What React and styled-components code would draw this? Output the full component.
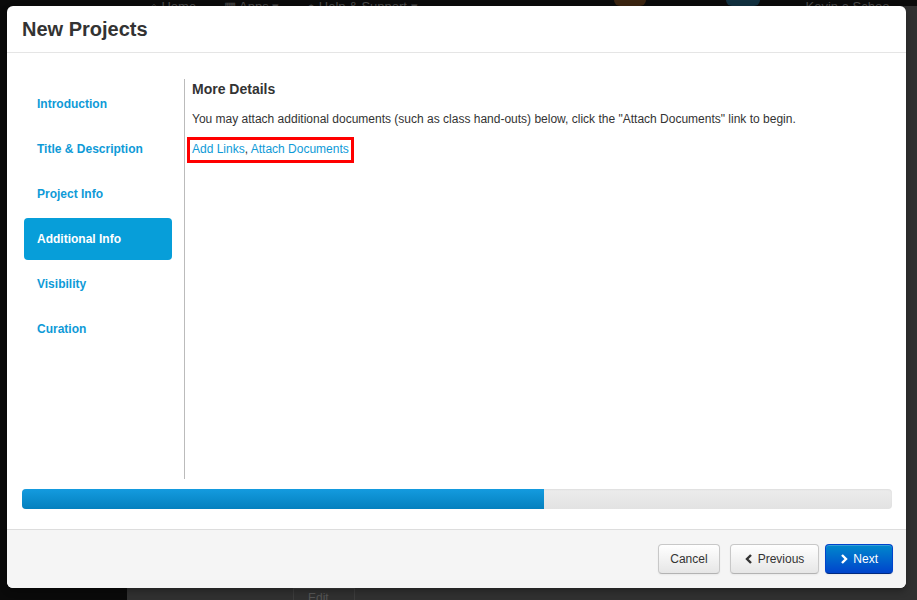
import React from "react";
import styled, { createGlobalStyle } from "styled-components";

const GlobalStyle = createGlobalStyle`
  html, body {
    margin: 0;
    padding: 0;
    background: #2f2f2f;
    font-family: "Liberation Sans", Arial, sans-serif;
  }
`;

const Page = styled.div`
  position: relative;
  width: 917px;
  height: 600px;
  overflow: hidden;
  background: #2f2f2f;
`;

const TopBar = styled.div`
  height: 6px;
  background: #0b0b0b;
  display: flex;
  align-items: flex-end;
  overflow: hidden;
  color: #4a4a4a;
  font-size: 13px;
  line-height: 13px;
`;

const TopItem = styled.span`
  margin-left: ${(p) => p.$left}px;
  white-space: nowrap;
  transform: translateY(7px);
`;

const TopBadge = styled.span`
  margin-left: ${(p) => p.$left}px;
  width: ${(p) => p.$w}px;
  height: 6px;
  border-radius: 0 0 6px 6px;
  background: ${(p) => p.$color};
`;

const PageRow = styled.div`
  display: flex;
  height: 594px;
`;

const DarkSide = styled.div`
  width: 127px;
  background: #0a0a0a;
`;

const PageMain = styled.div`
  flex: 1;
  background: #303030;
  display: flex;
  align-items: flex-end;
  padding-left: 166px;
`;

const EditStub = styled.div`
  width: 62px;
  height: 12px;
  border: 1px solid #3c3c3c;
  border-bottom: none;
  color: #555;
  font-size: 12px;
  line-height: 18px;
  padding-left: 14px;
  box-sizing: border-box;
  overflow: hidden;
`;

const Modal = styled.div`
  position: absolute;
  top: 6px;
  left: 7px;
  width: 899px;
  background: #fff;
  border-radius: 6px;
  box-shadow: 0 3px 7px rgba(0, 0, 0, 0.3);
  overflow: hidden;
`;

const Header = styled.div`
  height: 47px;
  box-sizing: border-box;
  border-bottom: 1px solid #e5e5e5;
  display: flex;
  align-items: center;
  padding: 0 15px;
`;

const Title = styled.h3`
  margin: 0;
  font-size: 20px;
  font-weight: bold;
  color: #333;
  padding-top: 1px;
`;

const Body = styled.div`
  padding: 26px 14px 20px 15px;
`;

const Columns = styled.div`
  display: flex;
  height: 400px;
  margin-left: 2px;
`;

const Sidebar = styled.ul`
  list-style: none;
  margin: 0;
  padding: 4px 0 0;
  width: 160px;
  display: flex;
  flex-direction: column;
  gap: 3px;
`;

const NavItem = styled.li`
  width: 148px;
  height: 42px;
  box-sizing: border-box;
  padding-left: 13px;
  display: flex;
  align-items: center;
  border-radius: 4px;
  font-size: 12px;
  font-weight: bold;
  color: ${(p) => (p.$active ? "#fff" : "#0e9ad7")};
  background: ${(p) => (p.$active ? "#079ed9" : "transparent")};
`;

const Content = styled.div`
  flex: 1;
  border-left: 1px solid #bbb;
  padding-left: 7px;
  color: #333;
`;

const Heading = styled.h4`
  margin: 0;
  font-size: 14px;
  line-height: 20px;
  font-weight: bold;
  color: #333;
`;

const Text = styled.p`
  margin: 11px 0 0;
  font-size: 12px;
  line-height: 18px;
`;

const LinkBox = styled.div`
  display: inline-block;
  margin: 9px 0 0 -5px;
  padding: 1px 2px 3px;
  border: 3px solid #f00;
  font-size: 12px;
  line-height: 16px;
  color: #333;
`;

const Link = styled.a`
  color: #0e9ad7;
  text-decoration: none;
`;

const Progress = styled.div`
  margin-top: 10px;
  height: 20px;
  border-radius: 4px;
  background: linear-gradient(#ececec, #e2e2e2);
  box-shadow: inset 0 1px 2px rgba(0, 0, 0, 0.06);
  overflow: hidden;
`;

const Bar = styled.div`
  height: 100%;
  background: linear-gradient(#149bdf, #0480be);
`;

const Footer = styled.div`
  height: 59px;
  box-sizing: border-box;
  border-top: 1px solid #ddd;
  background: #f5f5f5;
  display: flex;
  align-items: center;
  justify-content: flex-end;
  padding: 0 13px 0 15px;
`;

const Button = styled.button`
  height: 30px;
  margin-left: ${(p) => p.$gap || 0}px;
  padding: 0 ${(p) => p.$pad || 11}px;
  border-radius: 4px;
  font-family: "Liberation Sans", Arial, sans-serif;
  font-size: 12px;
  display: flex;
  align-items: center;
  gap: 5px;
  cursor: pointer;
  color: ${(p) => (p.$primary ? "#fff" : "#333")};
  border: 1px solid ${(p) => (p.$primary ? "#0044cc" : "#c8c8c8")};
  border-bottom-color: ${(p) => (p.$primary ? "#002a80" : "#b3b3b3")};
  background: ${(p) =>
    p.$primary
      ? "linear-gradient(#0088cc, #0044cc)"
      : "linear-gradient(#ffffff, #e6e6e6)"};
  box-shadow: inset 0 1px 0 rgba(255, 255, 255, 0.2), 0 1px 2px rgba(0, 0, 0, 0.05);
`;

const Chevron = ({ left }) => (
  <svg width="8" height="10" viewBox="0 0 8 10">
    <path
      d={left ? "M6 1 L2 5 L6 9" : "M2 1 L6 5 L2 9"}
      fill="none"
      stroke="currentColor"
      strokeWidth="2.4"
      strokeLinejoin="miter"
    />
  </svg>
);

const steps = [
  "Introduction",
  "Title & Description",
  "Project Info",
  "Additional Info",
  "Visibility",
  "Curation",
];

export default function App() {
  const progress = 60;
  return (
    <>
      <GlobalStyle />
      <Page>
        <TopBar>
          <TopItem $left={150}>⌂ Home</TopItem>
          <TopItem $left={28}>▦ Apps ▾</TopItem>
          <TopItem $left={28}>● Help &amp; Support ▾</TopItem>
          <TopBadge $left={196} $w={32} $color="#3a2410" />
          <TopBadge $left={80} $w={34} $color="#11303f" />
          <TopItem $left={46}>Kevin a Schoo</TopItem>
        </TopBar>
        <PageRow>
          <DarkSide />
          <PageMain>
            <EditStub>Edit</EditStub>
          </PageMain>
        </PageRow>

        <Modal>
          <Header>
            <Title>New Projects</Title>
          </Header>
          <Body>
            <Columns>
              <Sidebar>
                {steps.map((s) => (
                  <NavItem key={s} $active={s === "Additional Info"}>
                    {s}
                  </NavItem>
                ))}
              </Sidebar>
              <Content>
                <Heading>More Details</Heading>
                <Text>
                  You may attach additional documents (such as class hand-outs)
                  below, click the "Attach Documents" link to begin.
                </Text>
                <LinkBox>
                  <Link href="#">Add Links</Link>, <Link href="#">Attach Documents</Link>
                </LinkBox>
              </Content>
            </Columns>
            <Progress>
              <Bar style={{ width: `${progress}%` }} />
            </Progress>
          </Body>
          <Footer>
            <Button>Cancel</Button>
            <Button $gap={10} $pad={14}>
              <Chevron left />
              Previous
            </Button>
            <Button $gap={6} $primary $pad={14}>
              <Chevron />
              Next
            </Button>
          </Footer>
        </Modal>
      </Page>
    </>
  );
}
